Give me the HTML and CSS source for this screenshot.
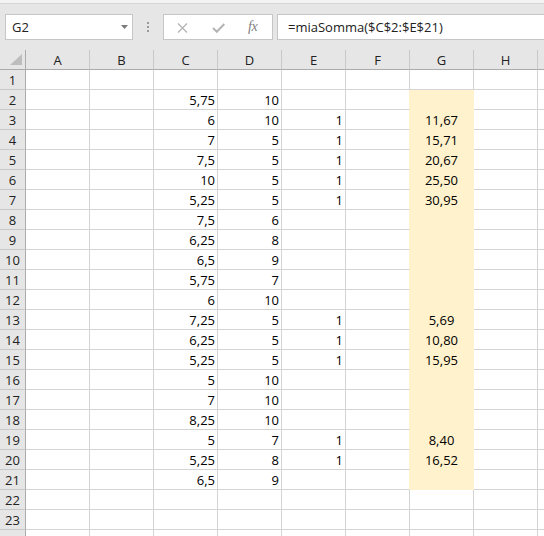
FILE: index.html
```html
<!DOCTYPE html>
<html>
<head>
<meta charset="utf-8">
<link rel="stylesheet" href="styles.css">
</head>
<body>
<div class="app">
  <div class="topstrip"></div>
  <div class="fbar">
    <div class="namebox"><span>G2</span><svg class="dd" width="7" height="4" viewBox="0 0 7 4"><polygon points="0,0 7,0 3.5,4" fill="#7a7a7a"/></svg></div>
    <div class="dots"><i></i><i></i><i></i></div>
    <div class="btnbox">
      <svg class="xicon" width="11" height="10" viewBox="0 0 11 10"><path d="M1 0.5 L10 9.5 M10 0.5 L1 9.5" stroke="#b4b4b4" stroke-width="1.3" fill="none"/></svg>
      <svg class="okicon" width="13" height="10" viewBox="0 0 13 10"><path d="M1 5 L4.8 8.8 L12.3 1" stroke="#b4b4b4" stroke-width="2" fill="none"/></svg>
      <span class="fx">fx</span>
    </div>
    <div class="formula">=miaSomma($C$2:$E$21)</div>
  </div>
  <div class="sheet">
    <div class="row head">
      <div class="rh corner"><svg width="25" height="19" viewBox="0 0 25 19"><polygon points="10,15 22,15 22,4" fill="#bdbdbd"/></svg></div>
      <div class="ch">A</div><div class="ch">B</div><div class="ch">C</div><div class="ch">D</div><div class="ch">E</div><div class="ch">F</div><div class="ch">G</div><div class="ch">H</div><div class="ch"></div>
    </div>
    <div class="row"><div class="rh">1</div><div class="c"></div><div class="c"></div><div class="c"></div><div class="c"></div><div class="c"></div><div class="c"></div><div class="c"></div><div class="c"></div><div class="c"></div></div>
    <div class="row"><div class="rh">2</div><div class="c"></div><div class="c"></div><div class="c">5,75</div><div class="c">10</div><div class="c"></div><div class="c pre"></div><div class="c hl"></div><div class="c"></div><div class="c"></div></div>
    <div class="row"><div class="rh">3</div><div class="c"></div><div class="c"></div><div class="c">6</div><div class="c">10</div><div class="c">1</div><div class="c pre"></div><div class="c hl">11,67</div><div class="c"></div><div class="c"></div></div>
    <div class="row"><div class="rh">4</div><div class="c"></div><div class="c"></div><div class="c">7</div><div class="c">5</div><div class="c">1</div><div class="c pre"></div><div class="c hl">15,71</div><div class="c"></div><div class="c"></div></div>
    <div class="row"><div class="rh">5</div><div class="c"></div><div class="c"></div><div class="c">7,5</div><div class="c">5</div><div class="c">1</div><div class="c pre"></div><div class="c hl">20,67</div><div class="c"></div><div class="c"></div></div>
    <div class="row"><div class="rh">6</div><div class="c"></div><div class="c"></div><div class="c">10</div><div class="c">5</div><div class="c">1</div><div class="c pre"></div><div class="c hl">25,50</div><div class="c"></div><div class="c"></div></div>
    <div class="row"><div class="rh">7</div><div class="c"></div><div class="c"></div><div class="c">5,25</div><div class="c">5</div><div class="c">1</div><div class="c pre"></div><div class="c hl">30,95</div><div class="c"></div><div class="c"></div></div>
    <div class="row"><div class="rh">8</div><div class="c"></div><div class="c"></div><div class="c">7,5</div><div class="c">6</div><div class="c"></div><div class="c pre"></div><div class="c hl"></div><div class="c"></div><div class="c"></div></div>
    <div class="row"><div class="rh">9</div><div class="c"></div><div class="c"></div><div class="c">6,25</div><div class="c">8</div><div class="c"></div><div class="c pre"></div><div class="c hl"></div><div class="c"></div><div class="c"></div></div>
    <div class="row"><div class="rh">10</div><div class="c"></div><div class="c"></div><div class="c">6,5</div><div class="c">9</div><div class="c"></div><div class="c pre"></div><div class="c hl"></div><div class="c"></div><div class="c"></div></div>
    <div class="row"><div class="rh">11</div><div class="c"></div><div class="c"></div><div class="c">5,75</div><div class="c">7</div><div class="c"></div><div class="c pre"></div><div class="c hl"></div><div class="c"></div><div class="c"></div></div>
    <div class="row"><div class="rh">12</div><div class="c"></div><div class="c"></div><div class="c">6</div><div class="c">10</div><div class="c"></div><div class="c pre"></div><div class="c hl"></div><div class="c"></div><div class="c"></div></div>
    <div class="row"><div class="rh">13</div><div class="c"></div><div class="c"></div><div class="c">7,25</div><div class="c">5</div><div class="c">1</div><div class="c pre"></div><div class="c hl">5,69</div><div class="c"></div><div class="c"></div></div>
    <div class="row"><div class="rh">14</div><div class="c"></div><div class="c"></div><div class="c">6,25</div><div class="c">5</div><div class="c">1</div><div class="c pre"></div><div class="c hl">10,80</div><div class="c"></div><div class="c"></div></div>
    <div class="row"><div class="rh">15</div><div class="c"></div><div class="c"></div><div class="c">5,25</div><div class="c">5</div><div class="c">1</div><div class="c pre"></div><div class="c hl">15,95</div><div class="c"></div><div class="c"></div></div>
    <div class="row"><div class="rh">16</div><div class="c"></div><div class="c"></div><div class="c">5</div><div class="c">10</div><div class="c"></div><div class="c pre"></div><div class="c hl"></div><div class="c"></div><div class="c"></div></div>
    <div class="row"><div class="rh">17</div><div class="c"></div><div class="c"></div><div class="c">7</div><div class="c">10</div><div class="c"></div><div class="c pre"></div><div class="c hl"></div><div class="c"></div><div class="c"></div></div>
    <div class="row"><div class="rh">18</div><div class="c"></div><div class="c"></div><div class="c">8,25</div><div class="c">10</div><div class="c"></div><div class="c pre"></div><div class="c hl"></div><div class="c"></div><div class="c"></div></div>
    <div class="row"><div class="rh">19</div><div class="c"></div><div class="c"></div><div class="c">5</div><div class="c">7</div><div class="c">1</div><div class="c pre"></div><div class="c hl">8,40</div><div class="c"></div><div class="c"></div></div>
    <div class="row"><div class="rh">20</div><div class="c"></div><div class="c"></div><div class="c">5,25</div><div class="c">8</div><div class="c">1</div><div class="c pre"></div><div class="c hl">16,52</div><div class="c"></div><div class="c"></div></div>
    <div class="row"><div class="rh">21</div><div class="c"></div><div class="c"></div><div class="c">6,5</div><div class="c">9</div><div class="c"></div><div class="c pre"></div><div class="c hl"></div><div class="c"></div><div class="c"></div></div>
    <div class="row"><div class="rh">22</div><div class="c"></div><div class="c"></div><div class="c"></div><div class="c"></div><div class="c"></div><div class="c"></div><div class="c"></div><div class="c"></div><div class="c"></div></div>
    <div class="row"><div class="rh">23</div><div class="c"></div><div class="c"></div><div class="c"></div><div class="c"></div><div class="c"></div><div class="c"></div><div class="c"></div><div class="c"></div><div class="c"></div></div>
    <div class="row"><div class="rh"></div><div class="c"></div><div class="c"></div><div class="c"></div><div class="c"></div><div class="c"></div><div class="c"></div><div class="c"></div><div class="c"></div><div class="c"></div></div>
  </div>
</div>
</body>
</html>
```
FILE: styles.css
```css
html, body {
  margin: 0;
  padding: 0;
  overflow: hidden;
  background: #ffffff;
}
.app {
  width: 544px;
  height: 536px;
  overflow: hidden;
  font-family: "Open Sans", "Liberation Sans", sans-serif;
  color: #000;
}
.topstrip {
  height: 3px;
  background: #f3f3f3;
  border-bottom: 1px solid #d6d6d6;
}
.fbar {
  height: 46px;
  box-sizing: border-box;
  background: #e6e6e6;
  display: flex;
  align-items: flex-start;
  padding: 10px 0 0 5px;
}
.namebox {
  width: 128px;
  height: 26px;
  box-sizing: border-box;
  border: 1px solid #c6c6c6;
  background: #fff;
  display: flex;
  align-items: center;
  justify-content: space-between;
  padding: 0 4px 0 6px;
  font-size: 13px;
  line-height: 24px;
  color: #222;
}
.namebox .dd {
  margin-top: -1px;
}
.dots {
  margin-left: 14px;
  width: 2px;
  height: 26px;
  display: flex;
  flex-direction: column;
  justify-content: center;
  gap: 2px;
}
.dots i {
  display: block;
  width: 2px;
  height: 2px;
  background: #9a9a9a;
}
.btnbox {
  margin-left: 14px;
  width: 110px;
  height: 26px;
  box-sizing: border-box;
  border: 1px solid #c6c6c6;
  background: #fff;
  display: flex;
  align-items: center;
  padding-left: 13px;
}
.xicon {
  margin-top: 2px;
}
.okicon {
  margin-left: 24px;
  margin-top: 2px;
}
.fx {
  margin-left: 23px;
  font-family: "Liberation Serif", serif;
  font-style: italic;
  font-size: 14px;
  color: #7f7f7f;
  letter-spacing: -0.5px;
  line-height: 24px;
}
.formula {
  margin-left: 4px;
  flex: 1;
  margin-right: -20px;
  height: 26px;
  box-sizing: border-box;
  border: 1px solid #c6c6c6;
  background: #fff;
  padding-left: 10px;
  font-size: 13px;
  line-height: 24px;
  color: #222;
  white-space: nowrap;
}
.sheet {
  background: #fff;
}
.row {
  display: grid;
  grid-template-columns: 26px repeat(8, 64px) 20px;
  height: 20px;
}
.row > div {
  box-sizing: border-box;
  border-right: 1px solid #d4d4d4;
  border-bottom: 1px solid #d4d4d4;
  height: 20px;
  overflow: hidden;
  white-space: nowrap;
}
.rh {
  background: #e6e6e6;
  text-align: center;
  font-size: 13px;
  line-height: 17px;
  padding-top: 2px;
  color: #222;
}
.row > .rh {
  border-right: 1px solid #ababab;
  border-bottom: 1px solid #c8c8c8;
}
.head > div {
  background: #e6e6e6;
}
.row.head > div {
  border-bottom: 1px solid #ababab;
  border-right: 1px solid #c8c8c8;
}
.row.head > .corner {
  border-right: 1px solid #ababab;
  padding: 0;
}
.corner svg {
  display: block;
}
.ch {
  text-align: center;
  font-size: 13px;
  line-height: 17px;
  padding-top: 2px;
  color: #222;
}
.c {
  text-align: right;
  padding: 2px 2px 0 0;
  font-size: 13px;
  line-height: 17px;
}
.row > .pre {
  border-right-color: #fff2cc;
}
.row > .hl {
  background: #fff2cc;
  border-right-color: #fff2cc;
  border-bottom-color: #fff2cc;
  text-align: center;
  padding-right: 0;
}
```
